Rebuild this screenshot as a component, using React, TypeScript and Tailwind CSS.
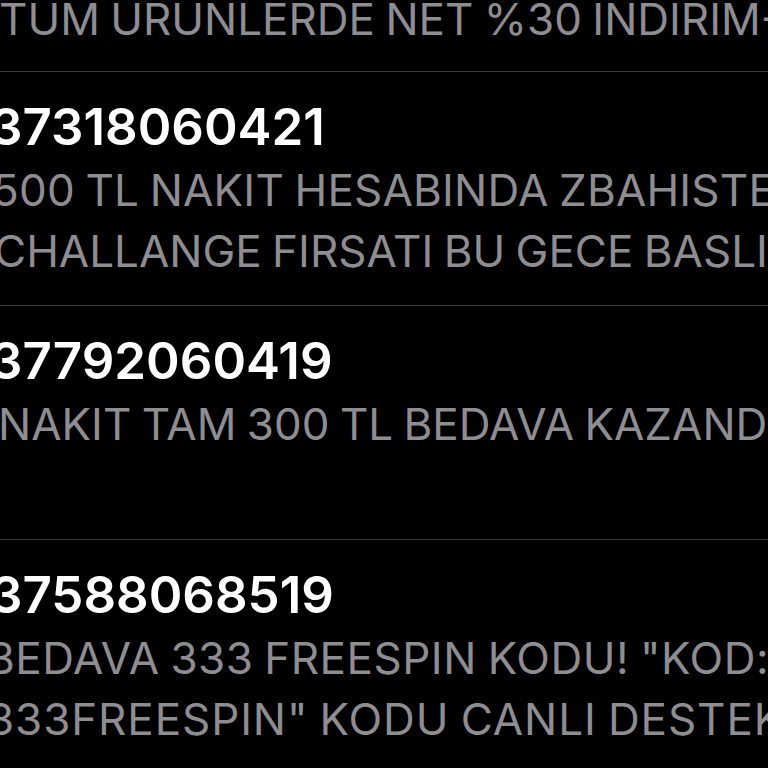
const rows = [
  {
    number: "37318060421",
    lines: [
      { text: "500 TL NAKIT HESABINDA ZBAHISTE", cls: "ml-[-8px] tracking-[0.2px]" },
      { text: "CHALLANGE FIRSATI BU GECE BASLIYOR", cls: "ml-[-6px]" },
    ],
  },
  {
    number: "37792060419",
    lines: [{ text: "NAKIT TAM 300 TL BEDAVA KAZANDIN", cls: "ml-[-2px]" }],
  },
  {
    number: "37588068519",
    lines: [
      { text: "BEDAVA 333 FREESPIN KODU! \"KOD:", cls: "ml-[-14px] tracking-[0.5px]" },
      { text: "333FREESPIN\" KODU CANLI DESTEKTEN", cls: "ml-[-13px] tracking-[0.9px]" },
    ],
  },
];

function Divider() {
  return <div className="h-px w-full bg-[#3b3b3d]" />;
}

export default function App() {
  return (
    <div
      className="w-[768px] h-[768px] overflow-hidden bg-black"
      style={{ fontFamily: "Inter, 'Liberation Sans', sans-serif" }}
    >
      <div className="h-[71px] overflow-hidden">
        <p className="mt-[-11px] ml-[-1px] whitespace-nowrap text-[44px] leading-[61px] [word-spacing:-2px] text-[#8d8d92]">
          TUM URUNLERDE NET %30 INDIRIM-
        </p>
      </div>
      {rows.map((row) => (
        <div key={row.number} className="h-[234px] overflow-hidden">
          <Divider />
          <div className="pt-[24px]">
            <p className="ml-[-10px] whitespace-nowrap text-[51px] leading-[62px] font-semibold text-white">
              {row.number}
            </p>
            <div className="mt-[2px]">
              {row.lines.map((line) => (
                <p
                  key={line.text}
                  className={`${line.cls} whitespace-nowrap text-[44px] leading-[61px] [word-spacing:-2px] text-[#8d8d92]`}
                >
                  {line.text}
                </p>
              ))}
            </div>
          </div>
        </div>
      ))}
    </div>
  );
}
